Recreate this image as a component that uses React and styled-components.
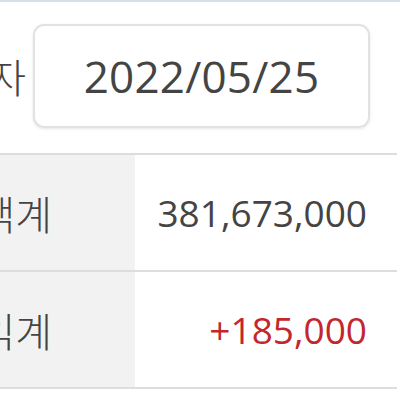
import React from 'react';
import styled, { createGlobalStyle } from 'styled-components';

const GlobalStyle = createGlobalStyle`
  html, body {
    margin: 0;
    padding: 0;
    background: #ffffff;
    overflow: hidden;
  }
  body {
    font-family: "Open Sans", "Noto Sans CJK KR", sans-serif;
    color: #444444;
  }
`;

const Page = styled.div`
  width: 400px;
  height: 400px;
  overflow: hidden;
  border-top: 2px solid #d3e3e5;
  box-sizing: border-box;
`;

const DateRow = styled.div`
  display: flex;
  align-items: center;
  gap: 7px;
  padding-top: 22px;
`;

const Label = styled.div`
  display: flex;
  justify-content: flex-end;
  width: ${p => p.$width}px;
  flex-shrink: 0;
  white-space: nowrap;
  font-family: "Noto Sans CJK KR", sans-serif;
  font-weight: 300;
  font-size: ${p => p.$size}px;
  color: #444444;
`;

const DateBox = styled.div`
  width: 337px;
  height: 104px;
  box-sizing: border-box;
  border: 2px solid #e2e2e2;
  border-radius: 11px;
  box-shadow: 0 1px 3px rgba(0, 0, 0, 0.1);
  display: flex;
  align-items: center;
  justify-content: center;
  font-size: 44px;
  color: #444444;
  letter-spacing: 0.2px;
`;

const Table = styled.div`
  margin-top: 25px;
  width: 397px;
  border-top: 2px solid #dddddd;
`;

const Row = styled.div`
  display: grid;
  grid-template-columns: 135px 1fr;
  height: 115px;
  border-bottom: 2px solid #dddddd;
`;

const Head = styled.div`
  background: #f2f2f2;
  display: flex;
  align-items: center;
  justify-content: flex-end;
  padding-right: 83px;
  white-space: nowrap;
  font-family: "Noto Sans CJK KR", sans-serif;
  font-weight: 300;
  font-size: 40px;
  color: #444444;
`;

const Value = styled.div`
  display: flex;
  align-items: center;
  justify-content: flex-end;
  padding-right: 30px;
  font-size: 37px;
  color: ${p => (p.$up ? '#c3272d' : '#444444')};
`;

const rows = [
  { label: '평가금액계', value: '381,673,000' },
  { label: '평가손익계', value: '+185,000', up: true },
];

export default function App() {
  return (
    <>
      <GlobalStyle />
      <Page>
        <DateRow>
          <Label $width={26} $size={40}>기준일자</Label>
          <DateBox>2022/05/25</DateBox>
        </DateRow>
        <Table>
          {rows.map(r => (
            <Row key={r.label}>
              <Head>{r.label}</Head>
              <Value $up={r.up}>{r.value}</Value>
            </Row>
          ))}
        </Table>
      </Page>
    </>
  );
}
